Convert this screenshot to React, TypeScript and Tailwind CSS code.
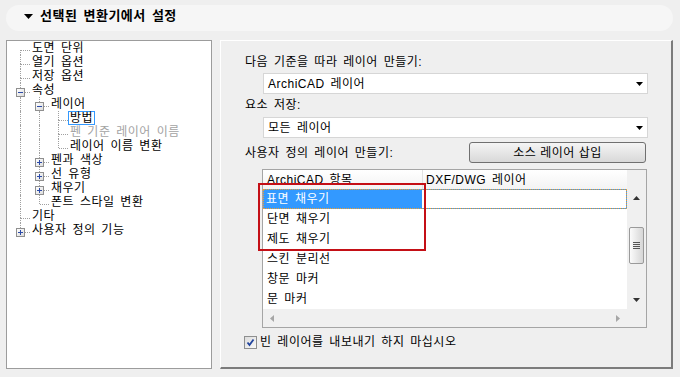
import React from 'react';

type TNode = {
  label: string;
  level: number;
  cont: boolean[];
  exp?: 'plus' | 'minus';
  first?: boolean;
  last?: boolean;
  gray?: boolean;
  sel?: boolean;
};

const nodes: TNode[] = [
  { label: '도면 단위', level: 0, cont: [], first: true },
  { label: '열기 옵션', level: 0, cont: [] },
  { label: '저장 옵션', level: 0, cont: [] },
  { label: '속성', level: 0, cont: [], exp: 'minus' },
  { label: '레이어', level: 1, cont: [true], exp: 'minus' },
  { label: '방법', level: 2, cont: [true, true], sel: true },
  { label: '펜 기준 레이어 이름', level: 2, cont: [true, true], gray: true },
  { label: '레이어 이름 변환', level: 2, cont: [true, true], last: true },
  { label: '펜과 색상', level: 1, cont: [true], exp: 'plus' },
  { label: '선 유형', level: 1, cont: [true], exp: 'plus' },
  { label: '채우기', level: 1, cont: [true], exp: 'plus' },
  { label: '폰트 스타일 변환', level: 1, cont: [true], last: true },
  { label: '기타', level: 0, cont: [] },
  { label: '사용자 정의 기능', level: 0, cont: [], exp: 'plus', last: true },
];

function Expander({ kind }: { kind: 'plus' | 'minus' }) {
  return (
    <span className="absolute left-[5px] top-[5px] w-[9px] h-[9px] border border-[#8f8f8f] bg-gradient-to-br from-white to-[#dcdcdc] z-10">
      <svg width="7" height="7" viewBox="0 0 7 7" className="block">
        <rect x="1" y="3" width="5" height="1" fill="#2b4aa8" />
        {kind === 'plus' && <rect x="3" y="1" width="1" height="5" fill="#2b4aa8" />}
      </svg>
    </span>
  );
}

function TreeRow({ n }: { n: TNode }) {
  return (
    <div className="flex h-[14px] pl-[4px]">
      {n.cont.map((c, i) => (
        <div key={i} className="relative w-[19px] shrink-0">
          {c && <span className="absolute left-[9px] top-0 bottom-0 border-l border-dotted border-[#a0a0a0]" />}
        </div>
      ))}
      <div className="relative w-[19px] shrink-0">
        {!n.first && <span className="absolute left-[9px] top-0 h-[9px] border-l border-dotted border-[#a0a0a0]" />}
        {!n.last && <span className="absolute left-[9px] top-[9px] bottom-0 border-l border-dotted border-[#a0a0a0]" />}
        <span className="absolute left-[10px] right-0 top-[9px] border-t border-dotted border-[#a0a0a0]" />
        {n.exp && <Expander kind={n.exp} />}
      </div>
      <span
        className={
          'h-[14px] leading-[12px] px-[1px] border whitespace-nowrap ' +
          (n.sel ? 'border-[#3399ff] ' : 'border-transparent ') +
          (n.gray ? 'text-[#a3a3a3]' : 'text-black')
        }
      >
        {n.label}
      </span>
    </div>
  );
}

function DownArrow({ color = '#000' }: { color?: string }) {
  return (
    <svg width="7" height="4" viewBox="0 0 7 4" className="block">
      <polygon points="0,0 7,0 3.5,4" fill={color} />
    </svg>
  );
}

function Dropdown({ text }: { text: string }) {
  return (
    <div className="ml-[18px] w-[385px] h-[21px] bg-white border border-[#d6d6d6] flex items-center pl-[4px] pr-[4px]">
      <span className="flex-1 leading-[14px]">{text}</span>
      <DownArrow />
    </div>
  );
}

const rows = ['표면 채우기', '단면 채우기', '제도 채우기', '스킨 분리선', '창문 마커', '문 마커'];

export default function App() {
  return (
    <div className="w-[680px] h-[377px] bg-[#efefef] overflow-hidden text-[12px] text-black tracking-[0.5px] [word-spacing:2px] font-[family-name:Liberation_Sans,Noto_Sans_CJK_KR,sans-serif]">
      {/* Header pill */}
      <div className="ml-[6px] mt-[5px] w-[667px] h-[26px] rounded-full bg-[#f6f6f6] flex items-start pt-[4px] pl-[18px]">
        <div className="flex items-center h-[14px]">
          <svg width="9" height="5" viewBox="0 0 9 5" className="block mt-[1px]">
            <polygon points="0,0 9,0 4.5,5" fill="#000" />
          </svg>
          <span className="ml-[7px] font-bold text-[13px] leading-[14px]">선택된 변환기에서 설정</span>
        </div>
      </div>

      <div className="flex mt-[9px] ml-[6px]">
        {/* Tree */}
        <div className="w-[206px] h-[329px] bg-white border border-[#9c9c9c] shrink-0">
          {nodes.map((n, i) => (
            <TreeRow key={i} n={n} />
          ))}
        </div>

        {/* Right panel */}
        <div className="ml-[8px] w-[453px] h-[329px] shrink-0 border-t border-l border-white border-r-2 border-b-2 border-r-[#7c7c7c] border-b-[#7c7c7c] flex flex-col pl-[24px] pt-[14px]">
          <div className="h-[14px] leading-[14px]">다음 기준을 따라 레이어 만들기:</div>
          <div className="mt-[4px]">
            <Dropdown text="ArchiCAD 레이어" />
          </div>
          <div className="mt-[4px] h-[14px] leading-[14px]">요소 저장:</div>
          <div className="mt-[5px]">
            <Dropdown text="모든 레이어" />
          </div>
          <div className="mt-[4px] w-[401px] h-[21px] flex items-center justify-between">
            <span className="leading-[14px]">사용자 정의 레이어 만들기:</span>
            <button className="w-[177px] h-[21px] rounded-[3px] border border-[#707070] bg-gradient-to-b from-[#f5f5f5] to-[#d8d8d8] flex items-center justify-center leading-[14px]">
              소스 레이어 삽입
            </button>
          </div>

          {/* List */}
          <div className="relative mt-[6px] ml-[17px] w-[385px] h-[159px] border border-[#a5a5a5] bg-white flex flex-col">
            <div className="h-[19px] flex shrink-0">
              <div className="w-[160px] h-full flex items-center pl-[4px] border-r border-[#e2e2e2] bg-gradient-to-b from-white to-[#f3f3f3]">
                ArchiCAD 항목
              </div>
              <div className="w-[204px] h-full flex items-center pl-[3px] bg-gradient-to-b from-white to-[#f3f3f3]">
                DXF/DWG 레이어
              </div>
              <div className="flex-1 h-full bg-[#f0f0f0]" />
            </div>
            <div className="h-[120px] flex shrink-0">
              <div className="w-[364px] flex flex-col">
                {rows.map((r, i) =>
                  i === 0 ? (
                    <div key={i} className="relative h-[20px] flex border border-[#3399ff]">
                      <div className="w-[159px] bg-[#3399ff] text-white flex items-center pl-[3px] -my-[1px] -ml-[1px]">{r}</div>
                      <div className="flex-1" />
                      <span className="absolute -inset-[1px] border border-dotted border-[#f0a030]" />
                    </div>
                  ) : (
                    <div key={i} className="h-[20px] flex items-center pl-[4px]">
                      {r}
                    </div>
                  )
                )}
              </div>
              {/* Vertical scrollbar */}
              <div className="w-[19px] bg-[#f0f0f0] flex flex-col items-center">
                <div className="h-[18px] flex items-center justify-center pb-[1px]">
                  <svg width="7" height="4" viewBox="0 0 7 4" className="block">
                    <polygon points="0,4 7,4 3.5,0" fill="#333" />
                  </svg>
                </div>
                <div className="mt-[20px] w-[15px] h-[37px] rounded-[2px] border border-[#9a9a9a] bg-gradient-to-r from-[#fbfbfb] to-[#d6d6d6] flex flex-col items-center justify-center gap-[1px]">
                  <span className="w-[7px] h-[1px] bg-[#555]" />
                  <span className="w-[7px] h-[1px] bg-[#555]" />
                  <span className="w-[7px] h-[1px] bg-[#555]" />
                  <span className="w-[7px] h-[1px] bg-[#555]" />
                </div>
                <div className="flex-1" />
                <div className="h-[18px] flex items-center justify-center">
                  <DownArrow color="#333" />
                </div>
              </div>
            </div>
            {/* Horizontal scrollbar */}
            <div className="h-[18px] bg-[#f0f0f0] flex items-center shrink-0">
              <div className="w-[364px] flex items-center justify-between px-[7px]">
                <svg width="4" height="7" viewBox="0 0 4 7" className="block">
                  <polygon points="4,0 4,7 0,3.5" fill="#a6a6a6" />
                </svg>
                <svg width="4" height="7" viewBox="0 0 4 7" className="block">
                  <polygon points="0,0 0,7 4,3.5" fill="#a6a6a6" />
                </svg>
              </div>
            </div>
            {/* Red highlight */}
            <div className="absolute left-[-5px] top-[13px] w-[168px] h-[68px] border-2 border-[#c40f16] pointer-events-none" />
          </div>

          {/* Checkbox */}
          <div className="mt-[7px] -ml-[1px] h-[14px] flex items-center">
            <span className="w-[13px] h-[13px] border border-[#8e8f8f] bg-gradient-to-br from-[#dcdcdc] to-[#f8f8f8] flex items-center justify-center">
              <svg width="9" height="9" viewBox="0 0 9 9" className="block">
                <path d="M1.5 4.5 L3.5 7 L7.5 1.5" stroke="#21449d" strokeWidth="1.8" fill="none" />
              </svg>
            </span>
            <span className="ml-[3px] leading-[14px]">빈 레이어를 내보내기 하지 마십시오</span>
          </div>
        </div>
      </div>
    </div>
  );
}
